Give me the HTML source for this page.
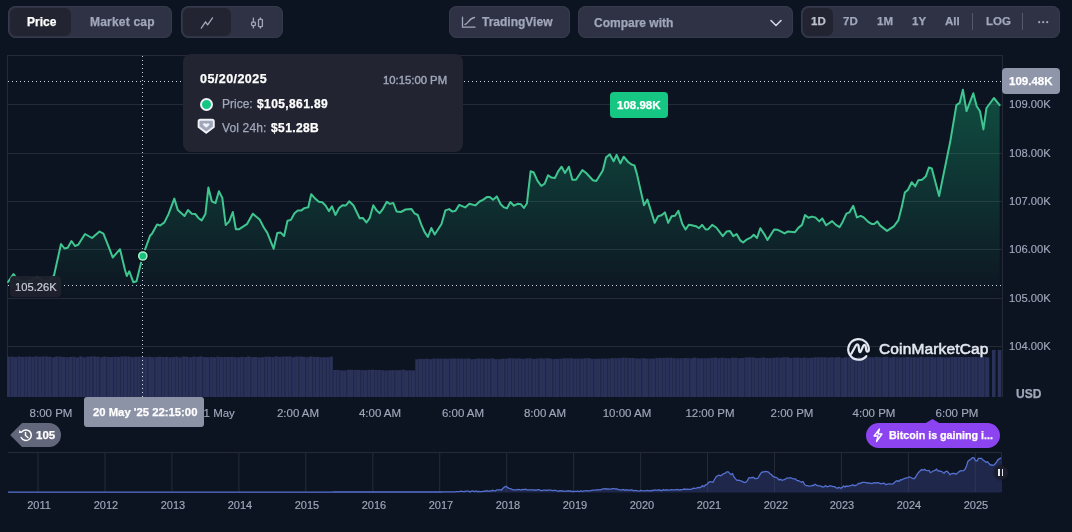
<!DOCTYPE html>
<html><head><meta charset="utf-8">
<style>
*{margin:0;padding:0;box-sizing:border-box}
html,body{width:1072px;height:532px;overflow:hidden;background:#0d1421;font-family:"Liberation Sans",sans-serif;-webkit-font-smoothing:antialiased}
.t,.xl,.yl,.yr{will-change:transform}
.abs{position:absolute}
.grp{position:absolute;background:#2f3244;border-radius:8px;box-shadow:inset 0 0 0 1px #363a4c}
.act{position:absolute;background:#222531;border-radius:6px}
.t{position:absolute;white-space:nowrap;line-height:14px;font-size:12px;font-weight:700;-webkit-text-stroke:0.25px currentColor}
.g{color:#a1a7bb}
.w{color:#fff}
.xl{position:absolute;top:406px;width:80px;text-align:center;font-size:11.5px;line-height:14px;color:#a1a7bb;white-space:nowrap;-webkit-text-stroke:0.15px #a1a7bb}
.yl{position:absolute;left:1008.5px;font-size:11.2px;line-height:14px;color:#a1a7bb;white-space:nowrap;-webkit-text-stroke:0.15px #a1a7bb}
.yr{position:absolute;top:498px;width:40px;text-align:center;font-size:11px;line-height:14px;color:#a1a7bb;-webkit-text-stroke:0.15px #a1a7bb}
svg{position:absolute;left:0;top:0}
</style></head><body>
<svg width="1072" height="532" viewBox="0 0 1072 532">
<defs>
<linearGradient id="gf" x1="0" y1="81" x2="0" y2="300" gradientUnits="userSpaceOnUse">
<stop offset="0" stop-color="#16c784" stop-opacity="0.34"/>
<stop offset="1" stop-color="#16c784" stop-opacity="0"/>
</linearGradient>
</defs>
<g stroke="#262a38" stroke-width="1" fill="none">
<line x1="7.5" y1="55" x2="7.5" y2="397"/>
<line x1="7" y1="55.5" x2="1002" y2="55.5"/>
<line x1="1002.5" y1="55" x2="1002.5" y2="397"/>
<line x1="7" y1="104.5" x2="1002" y2="104.5"/><line x1="7" y1="153.5" x2="1002" y2="153.5"/><line x1="7" y1="201.5" x2="1002" y2="201.5"/><line x1="7" y1="249.5" x2="1002" y2="249.5"/><line x1="7" y1="298.5" x2="1002" y2="298.5"/><line x1="7" y1="346.5" x2="1002" y2="346.5"/>
</g>
<g fill="#2a3259"><rect x="7.00" y="356.7" width="3.43" height="40.3"/><rect x="10.43" y="356.6" width="3.43" height="40.4"/><rect x="13.86" y="357.1" width="3.43" height="39.9"/><rect x="17.29" y="356.5" width="3.43" height="40.5"/><rect x="20.72" y="356.9" width="3.43" height="40.1"/><rect x="24.15" y="356.8" width="3.43" height="40.2"/><rect x="27.58" y="356.5" width="3.43" height="40.5"/><rect x="31.01" y="356.9" width="3.43" height="40.1"/><rect x="34.44" y="356.4" width="3.43" height="40.6"/><rect x="37.87" y="356.8" width="3.43" height="40.2"/><rect x="41.30" y="356.5" width="3.43" height="40.5"/><rect x="44.73" y="356.5" width="3.43" height="40.5"/><rect x="48.16" y="356.8" width="3.43" height="40.2"/><rect x="51.59" y="357.2" width="3.43" height="39.8"/><rect x="55.02" y="356.5" width="3.43" height="40.5"/><rect x="58.45" y="356.6" width="3.43" height="40.4"/><rect x="61.88" y="357.0" width="3.43" height="40.0"/><rect x="65.31" y="357.3" width="3.43" height="39.7"/><rect x="68.74" y="357.0" width="3.43" height="40.0"/><rect x="72.17" y="356.8" width="3.43" height="40.2"/><rect x="75.60" y="357.4" width="3.43" height="39.6"/><rect x="79.03" y="356.4" width="3.43" height="40.6"/><rect x="82.46" y="357.3" width="3.43" height="39.7"/><rect x="85.89" y="356.7" width="3.43" height="40.3"/><rect x="89.32" y="356.5" width="3.43" height="40.5"/><rect x="92.75" y="356.5" width="3.43" height="40.5"/><rect x="96.18" y="356.7" width="3.43" height="40.3"/><rect x="99.61" y="357.2" width="3.43" height="39.8"/><rect x="103.04" y="356.6" width="3.43" height="40.4"/><rect x="106.47" y="357.0" width="3.43" height="40.0"/><rect x="109.90" y="357.0" width="3.43" height="40.0"/><rect x="113.33" y="356.8" width="3.43" height="40.2"/><rect x="116.76" y="356.9" width="3.43" height="40.1"/><rect x="120.19" y="356.5" width="3.43" height="40.5"/><rect x="123.62" y="356.5" width="3.43" height="40.5"/><rect x="127.05" y="356.6" width="3.43" height="40.4"/><rect x="130.48" y="357.1" width="3.43" height="39.9"/><rect x="133.91" y="356.8" width="3.43" height="40.2"/><rect x="137.34" y="356.7" width="3.43" height="40.3"/><rect x="140.77" y="357.0" width="3.43" height="40.0"/><rect x="144.20" y="356.9" width="3.43" height="40.1"/><rect x="147.63" y="356.7" width="3.43" height="40.3"/><rect x="151.06" y="357.2" width="3.43" height="39.8"/><rect x="154.49" y="357.1" width="3.43" height="39.9"/><rect x="157.92" y="356.6" width="3.43" height="40.4"/><rect x="161.35" y="357.0" width="3.43" height="40.0"/><rect x="164.78" y="356.9" width="3.43" height="40.1"/><rect x="168.21" y="357.3" width="3.43" height="39.7"/><rect x="171.64" y="357.1" width="3.43" height="39.9"/><rect x="175.07" y="356.7" width="3.43" height="40.3"/><rect x="178.50" y="357.4" width="3.43" height="39.6"/><rect x="181.93" y="356.5" width="3.43" height="40.5"/><rect x="185.36" y="356.8" width="3.43" height="40.2"/><rect x="188.79" y="357.2" width="3.43" height="39.8"/><rect x="192.22" y="356.6" width="3.43" height="40.4"/><rect x="195.65" y="356.9" width="3.43" height="40.1"/><rect x="199.08" y="356.4" width="3.43" height="40.6"/><rect x="202.51" y="357.1" width="3.43" height="39.9"/><rect x="205.94" y="357.2" width="3.43" height="39.8"/><rect x="209.37" y="357.0" width="3.43" height="40.0"/><rect x="212.80" y="357.3" width="3.43" height="39.7"/><rect x="216.23" y="356.7" width="3.43" height="40.3"/><rect x="219.66" y="357.1" width="3.43" height="39.9"/><rect x="223.09" y="357.0" width="3.43" height="40.0"/><rect x="226.52" y="357.0" width="3.43" height="40.0"/><rect x="229.95" y="356.9" width="3.43" height="40.1"/><rect x="233.38" y="357.2" width="3.43" height="39.8"/><rect x="236.81" y="357.3" width="3.43" height="39.7"/><rect x="240.24" y="356.9" width="3.43" height="40.1"/><rect x="243.67" y="357.1" width="3.43" height="39.9"/><rect x="247.10" y="356.5" width="3.43" height="40.5"/><rect x="250.53" y="357.1" width="3.43" height="39.9"/><rect x="253.96" y="357.0" width="3.43" height="40.0"/><rect x="257.39" y="357.4" width="3.43" height="39.6"/><rect x="260.82" y="357.2" width="3.43" height="39.8"/><rect x="264.25" y="356.7" width="3.43" height="40.3"/><rect x="267.68" y="356.8" width="3.43" height="40.2"/><rect x="271.11" y="357.1" width="3.43" height="39.9"/><rect x="274.54" y="356.4" width="3.43" height="40.6"/><rect x="277.97" y="356.9" width="3.43" height="40.1"/><rect x="281.40" y="356.6" width="3.43" height="40.4"/><rect x="284.83" y="356.5" width="3.43" height="40.5"/><rect x="288.26" y="356.5" width="3.43" height="40.5"/><rect x="291.69" y="357.2" width="3.43" height="39.8"/><rect x="295.12" y="356.5" width="3.43" height="40.5"/><rect x="298.55" y="356.6" width="3.43" height="40.4"/><rect x="301.98" y="356.8" width="3.43" height="40.2"/><rect x="305.41" y="357.3" width="3.43" height="39.7"/><rect x="308.84" y="356.5" width="3.43" height="40.5"/><rect x="312.27" y="356.8" width="3.43" height="40.2"/><rect x="315.70" y="356.9" width="3.43" height="40.1"/><rect x="319.13" y="357.3" width="3.43" height="39.7"/><rect x="322.56" y="357.2" width="3.43" height="39.8"/><rect x="325.99" y="357.3" width="3.43" height="39.7"/><rect x="329.42" y="356.7" width="3.43" height="40.3"/><rect x="332.85" y="370.0" width="3.43" height="27.0"/><rect x="336.28" y="370.0" width="3.43" height="27.0"/><rect x="339.71" y="370.4" width="3.43" height="26.6"/><rect x="343.14" y="370.5" width="3.43" height="26.5"/><rect x="346.57" y="369.8" width="3.43" height="27.2"/><rect x="350.00" y="369.8" width="3.43" height="27.2"/><rect x="353.43" y="369.9" width="3.43" height="27.1"/><rect x="356.86" y="369.9" width="3.43" height="27.1"/><rect x="360.29" y="370.1" width="3.43" height="26.9"/><rect x="363.72" y="370.2" width="3.43" height="26.8"/><rect x="367.15" y="369.9" width="3.43" height="27.1"/><rect x="370.58" y="369.7" width="3.43" height="27.3"/><rect x="374.01" y="370.0" width="3.43" height="27.0"/><rect x="377.44" y="370.0" width="3.43" height="27.0"/><rect x="380.87" y="370.2" width="3.43" height="26.8"/><rect x="384.30" y="370.5" width="3.43" height="26.5"/><rect x="387.73" y="370.3" width="3.43" height="26.7"/><rect x="391.16" y="370.1" width="3.43" height="26.9"/><rect x="394.59" y="370.2" width="3.43" height="26.8"/><rect x="398.02" y="370.2" width="3.43" height="26.8"/><rect x="401.45" y="369.7" width="3.43" height="27.3"/><rect x="404.88" y="370.4" width="3.43" height="26.6"/><rect x="408.31" y="370.3" width="3.43" height="26.7"/><rect x="411.74" y="370.4" width="3.43" height="26.6"/><rect x="415.17" y="359.3" width="3.43" height="37.7"/><rect x="418.60" y="358.9" width="3.43" height="38.1"/><rect x="422.03" y="358.9" width="3.43" height="38.1"/><rect x="425.46" y="358.7" width="3.43" height="38.3"/><rect x="428.89" y="359.1" width="3.43" height="37.9"/><rect x="432.32" y="358.6" width="3.43" height="38.4"/><rect x="435.75" y="358.6" width="3.43" height="38.4"/><rect x="439.18" y="358.7" width="3.43" height="38.3"/><rect x="442.61" y="358.6" width="3.43" height="38.4"/><rect x="446.04" y="358.8" width="3.43" height="38.2"/><rect x="449.47" y="358.5" width="3.43" height="38.5"/><rect x="452.90" y="358.5" width="3.43" height="38.5"/><rect x="456.33" y="358.6" width="3.43" height="38.4"/><rect x="459.76" y="358.5" width="3.43" height="38.5"/><rect x="463.19" y="358.7" width="3.43" height="38.3"/><rect x="466.62" y="358.4" width="3.43" height="38.6"/><rect x="470.05" y="359.2" width="3.43" height="37.8"/><rect x="473.48" y="358.9" width="3.43" height="38.1"/><rect x="476.91" y="358.5" width="3.43" height="38.5"/><rect x="480.34" y="358.6" width="3.43" height="38.4"/><rect x="483.77" y="358.7" width="3.43" height="38.3"/><rect x="487.20" y="358.7" width="3.43" height="38.3"/><rect x="490.63" y="358.4" width="3.43" height="38.6"/><rect x="494.06" y="359.1" width="3.43" height="37.9"/><rect x="497.49" y="359.2" width="3.43" height="37.8"/><rect x="500.92" y="358.7" width="3.43" height="38.3"/><rect x="504.35" y="358.7" width="3.43" height="38.3"/><rect x="507.78" y="358.3" width="3.43" height="38.7"/><rect x="511.21" y="358.3" width="3.43" height="38.7"/><rect x="514.64" y="358.5" width="3.43" height="38.5"/><rect x="518.07" y="358.4" width="3.43" height="38.6"/><rect x="521.50" y="358.9" width="3.43" height="38.1"/><rect x="524.93" y="358.3" width="3.43" height="38.7"/><rect x="528.36" y="358.2" width="3.43" height="38.8"/><rect x="531.79" y="359.0" width="3.43" height="38.0"/><rect x="535.22" y="358.6" width="3.43" height="38.4"/><rect x="538.65" y="358.3" width="3.43" height="38.7"/><rect x="542.08" y="358.6" width="3.43" height="38.4"/><rect x="545.51" y="358.1" width="3.43" height="38.9"/><rect x="548.94" y="358.6" width="3.43" height="38.4"/><rect x="552.37" y="359.0" width="3.43" height="38.0"/><rect x="555.80" y="358.8" width="3.43" height="38.2"/><rect x="559.23" y="358.7" width="3.43" height="38.3"/><rect x="562.66" y="358.3" width="3.43" height="38.7"/><rect x="566.09" y="358.4" width="3.43" height="38.6"/><rect x="569.52" y="358.2" width="3.43" height="38.8"/><rect x="572.95" y="358.7" width="3.43" height="38.3"/><rect x="576.38" y="358.5" width="3.43" height="38.5"/><rect x="579.81" y="358.7" width="3.43" height="38.3"/><rect x="583.24" y="358.3" width="3.43" height="38.7"/><rect x="586.67" y="358.1" width="3.43" height="38.9"/><rect x="590.10" y="358.7" width="3.43" height="38.3"/><rect x="593.53" y="358.8" width="3.43" height="38.2"/><rect x="596.96" y="358.7" width="3.43" height="38.3"/><rect x="600.39" y="358.6" width="3.43" height="38.4"/><rect x="603.82" y="358.6" width="3.43" height="38.4"/><rect x="607.25" y="358.5" width="3.43" height="38.5"/><rect x="610.68" y="358.1" width="3.43" height="38.9"/><rect x="614.11" y="358.3" width="3.43" height="38.7"/><rect x="617.54" y="358.1" width="3.43" height="38.9"/><rect x="620.97" y="357.8" width="3.43" height="39.2"/><rect x="624.40" y="357.8" width="3.43" height="39.2"/><rect x="627.83" y="358.0" width="3.43" height="39.0"/><rect x="631.26" y="358.0" width="3.43" height="39.0"/><rect x="634.69" y="358.4" width="3.43" height="38.6"/><rect x="638.12" y="358.6" width="3.43" height="38.4"/><rect x="641.55" y="358.1" width="3.43" height="38.9"/><rect x="644.98" y="358.6" width="3.43" height="38.4"/><rect x="648.41" y="358.6" width="3.43" height="38.4"/><rect x="651.84" y="358.6" width="3.43" height="38.4"/><rect x="655.27" y="358.0" width="3.43" height="39.0"/><rect x="658.70" y="357.9" width="3.43" height="39.1"/><rect x="662.13" y="357.9" width="3.43" height="39.1"/><rect x="665.56" y="357.8" width="3.43" height="39.2"/><rect x="668.99" y="357.8" width="3.43" height="39.2"/><rect x="672.42" y="358.2" width="3.43" height="38.8"/><rect x="675.85" y="358.4" width="3.43" height="38.6"/><rect x="679.28" y="358.3" width="3.43" height="38.7"/><rect x="682.71" y="358.0" width="3.43" height="39.0"/><rect x="686.14" y="358.2" width="3.43" height="38.8"/><rect x="689.57" y="358.3" width="3.43" height="38.7"/><rect x="693.00" y="357.6" width="3.43" height="39.4"/><rect x="696.43" y="358.1" width="3.43" height="38.9"/><rect x="699.86" y="358.3" width="3.43" height="38.7"/><rect x="703.29" y="358.2" width="3.43" height="38.8"/><rect x="706.72" y="358.2" width="3.43" height="38.8"/><rect x="710.15" y="357.9" width="3.43" height="39.1"/><rect x="713.58" y="357.6" width="3.43" height="39.4"/><rect x="717.01" y="358.2" width="3.43" height="38.8"/><rect x="720.44" y="357.7" width="3.43" height="39.3"/><rect x="723.87" y="358.1" width="3.43" height="38.9"/><rect x="727.30" y="358.3" width="3.43" height="38.7"/><rect x="730.73" y="357.7" width="3.43" height="39.3"/><rect x="734.16" y="357.7" width="3.43" height="39.3"/><rect x="737.59" y="358.2" width="3.43" height="38.8"/><rect x="741.02" y="358.0" width="3.43" height="39.0"/><rect x="744.45" y="357.5" width="3.43" height="39.5"/><rect x="747.88" y="357.4" width="3.43" height="39.6"/><rect x="751.31" y="357.4" width="3.43" height="39.6"/><rect x="754.74" y="358.1" width="3.43" height="38.9"/><rect x="758.17" y="358.0" width="3.43" height="39.0"/><rect x="761.60" y="357.4" width="3.43" height="39.6"/><rect x="765.03" y="358.0" width="3.43" height="39.0"/><rect x="768.46" y="358.1" width="3.43" height="38.9"/><rect x="771.89" y="357.8" width="3.43" height="39.2"/><rect x="775.32" y="357.5" width="3.43" height="39.5"/><rect x="778.75" y="357.7" width="3.43" height="39.3"/><rect x="782.18" y="357.3" width="3.43" height="39.7"/><rect x="785.61" y="357.2" width="3.43" height="39.8"/><rect x="789.04" y="358.0" width="3.43" height="39.0"/><rect x="792.47" y="357.7" width="3.43" height="39.3"/><rect x="795.90" y="357.6" width="3.43" height="39.4"/><rect x="799.33" y="358.0" width="3.43" height="39.0"/><rect x="802.76" y="357.5" width="3.43" height="39.5"/><rect x="806.19" y="357.9" width="3.43" height="39.1"/><rect x="809.62" y="357.8" width="3.43" height="39.2"/><rect x="813.05" y="357.3" width="3.43" height="39.7"/><rect x="816.48" y="357.3" width="3.43" height="39.7"/><rect x="819.91" y="357.3" width="3.43" height="39.7"/><rect x="823.34" y="357.3" width="3.43" height="39.7"/><rect x="826.77" y="357.6" width="3.43" height="39.4"/><rect x="830.20" y="357.2" width="3.43" height="39.8"/><rect x="833.63" y="357.4" width="3.43" height="39.6"/><rect x="837.06" y="357.1" width="3.43" height="39.9"/><rect x="840.49" y="357.8" width="3.43" height="39.2"/><rect x="843.92" y="357.3" width="3.43" height="39.7"/><rect x="847.35" y="357.4" width="3.43" height="39.6"/><rect x="850.78" y="357.5" width="3.43" height="39.5"/><rect x="854.21" y="357.7" width="3.43" height="39.3"/><rect x="857.64" y="357.3" width="3.43" height="39.7"/><rect x="861.07" y="357.7" width="3.43" height="39.3"/><rect x="864.50" y="357.3" width="3.43" height="39.7"/><rect x="867.93" y="357.3" width="3.43" height="39.7"/><rect x="871.36" y="357.3" width="3.43" height="39.7"/><rect x="874.79" y="356.9" width="3.43" height="40.1"/><rect x="878.22" y="357.2" width="3.43" height="39.8"/><rect x="881.65" y="357.0" width="3.43" height="40.0"/><rect x="885.08" y="356.8" width="3.43" height="40.2"/><rect x="888.51" y="357.5" width="3.43" height="39.5"/><rect x="891.94" y="356.9" width="3.43" height="40.1"/><rect x="895.37" y="357.2" width="3.43" height="39.8"/><rect x="898.80" y="357.4" width="3.43" height="39.6"/><rect x="902.23" y="357.2" width="3.43" height="39.8"/><rect x="905.66" y="357.0" width="3.43" height="40.0"/><rect x="909.09" y="357.2" width="3.43" height="39.8"/><rect x="912.52" y="357.2" width="3.43" height="39.8"/><rect x="915.95" y="357.4" width="3.43" height="39.6"/><rect x="919.38" y="356.8" width="3.43" height="40.2"/><rect x="922.81" y="357.2" width="3.43" height="39.8"/><rect x="926.24" y="356.9" width="3.43" height="40.1"/><rect x="929.67" y="356.9" width="3.43" height="40.1"/><rect x="933.10" y="357.3" width="3.43" height="39.7"/><rect x="936.53" y="357.1" width="3.43" height="39.9"/><rect x="939.96" y="357.1" width="3.43" height="39.9"/><rect x="943.39" y="357.3" width="3.43" height="39.7"/><rect x="946.82" y="357.4" width="3.43" height="39.6"/><rect x="950.25" y="356.9" width="3.43" height="40.1"/><rect x="953.68" y="357.1" width="3.43" height="39.9"/><rect x="957.11" y="357.0" width="3.43" height="40.0"/><rect x="960.54" y="357.0" width="3.43" height="40.0"/><rect x="963.97" y="357.1" width="3.43" height="39.9"/><rect x="967.40" y="356.9" width="3.43" height="40.1"/><rect x="970.83" y="356.9" width="3.43" height="40.1"/><rect x="974.26" y="356.9" width="3.43" height="40.1"/><rect x="977.69" y="357.3" width="3.43" height="39.7"/><rect x="981.12" y="357.1" width="3.43" height="39.9"/><rect x="984.55" y="357.2" width="3.43" height="39.8"/><rect x="987.98" y="357.3" width="1.32" height="39.7"/></g><g fill="#1f2646" fill-opacity="0.7"><rect x="10.43" y="356.6" width="0.8" height="40.4"/><rect x="17.29" y="356.5" width="0.8" height="40.5"/><rect x="24.15" y="356.8" width="0.8" height="40.2"/><rect x="31.01" y="356.9" width="0.8" height="40.1"/><rect x="37.87" y="356.8" width="0.8" height="40.2"/><rect x="44.73" y="356.5" width="0.8" height="40.5"/><rect x="51.59" y="357.2" width="0.8" height="39.8"/><rect x="58.45" y="356.6" width="0.8" height="40.4"/><rect x="65.31" y="357.3" width="0.8" height="39.7"/><rect x="72.17" y="356.8" width="0.8" height="40.2"/><rect x="79.03" y="356.4" width="0.8" height="40.6"/><rect x="85.89" y="356.7" width="0.8" height="40.3"/><rect x="92.75" y="356.5" width="0.8" height="40.5"/><rect x="99.61" y="357.2" width="0.8" height="39.8"/><rect x="106.47" y="357.0" width="0.8" height="40.0"/><rect x="113.33" y="356.8" width="0.8" height="40.2"/><rect x="120.19" y="356.5" width="0.8" height="40.5"/><rect x="127.05" y="356.6" width="0.8" height="40.4"/><rect x="133.91" y="356.8" width="0.8" height="40.2"/><rect x="140.77" y="357.0" width="0.8" height="40.0"/><rect x="147.63" y="356.7" width="0.8" height="40.3"/><rect x="154.49" y="357.1" width="0.8" height="39.9"/><rect x="161.35" y="357.0" width="0.8" height="40.0"/><rect x="168.21" y="357.3" width="0.8" height="39.7"/><rect x="175.07" y="356.7" width="0.8" height="40.3"/><rect x="181.93" y="356.5" width="0.8" height="40.5"/><rect x="188.79" y="357.2" width="0.8" height="39.8"/><rect x="195.65" y="356.9" width="0.8" height="40.1"/><rect x="202.51" y="357.1" width="0.8" height="39.9"/><rect x="209.37" y="357.0" width="0.8" height="40.0"/><rect x="216.23" y="356.7" width="0.8" height="40.3"/><rect x="223.09" y="357.0" width="0.8" height="40.0"/><rect x="229.95" y="356.9" width="0.8" height="40.1"/><rect x="236.81" y="357.3" width="0.8" height="39.7"/><rect x="243.67" y="357.1" width="0.8" height="39.9"/><rect x="250.53" y="357.1" width="0.8" height="39.9"/><rect x="257.39" y="357.4" width="0.8" height="39.6"/><rect x="264.25" y="356.7" width="0.8" height="40.3"/><rect x="271.11" y="357.1" width="0.8" height="39.9"/><rect x="277.97" y="356.9" width="0.8" height="40.1"/><rect x="284.83" y="356.5" width="0.8" height="40.5"/><rect x="291.69" y="357.2" width="0.8" height="39.8"/><rect x="298.55" y="356.6" width="0.8" height="40.4"/><rect x="305.41" y="357.3" width="0.8" height="39.7"/><rect x="312.27" y="356.8" width="0.8" height="40.2"/><rect x="319.13" y="357.3" width="0.8" height="39.7"/><rect x="325.99" y="357.3" width="0.8" height="39.7"/><rect x="332.85" y="370.0" width="0.8" height="27.0"/><rect x="339.71" y="370.4" width="0.8" height="26.6"/><rect x="346.57" y="369.8" width="0.8" height="27.2"/><rect x="353.43" y="369.9" width="0.8" height="27.1"/><rect x="360.29" y="370.1" width="0.8" height="26.9"/><rect x="367.15" y="369.9" width="0.8" height="27.1"/><rect x="374.01" y="370.0" width="0.8" height="27.0"/><rect x="380.87" y="370.2" width="0.8" height="26.8"/><rect x="387.73" y="370.3" width="0.8" height="26.7"/><rect x="394.59" y="370.2" width="0.8" height="26.8"/><rect x="401.45" y="369.7" width="0.8" height="27.3"/><rect x="408.31" y="370.3" width="0.8" height="26.7"/><rect x="415.17" y="359.3" width="0.8" height="37.7"/><rect x="422.03" y="358.9" width="0.8" height="38.1"/><rect x="428.89" y="359.1" width="0.8" height="37.9"/><rect x="435.75" y="358.6" width="0.8" height="38.4"/><rect x="442.61" y="358.6" width="0.8" height="38.4"/><rect x="449.47" y="358.5" width="0.8" height="38.5"/><rect x="456.33" y="358.6" width="0.8" height="38.4"/><rect x="463.19" y="358.7" width="0.8" height="38.3"/><rect x="470.05" y="359.2" width="0.8" height="37.8"/><rect x="476.91" y="358.5" width="0.8" height="38.5"/><rect x="483.77" y="358.7" width="0.8" height="38.3"/><rect x="490.63" y="358.4" width="0.8" height="38.6"/><rect x="497.49" y="359.2" width="0.8" height="37.8"/><rect x="504.35" y="358.7" width="0.8" height="38.3"/><rect x="511.21" y="358.3" width="0.8" height="38.7"/><rect x="518.07" y="358.4" width="0.8" height="38.6"/><rect x="524.93" y="358.3" width="0.8" height="38.7"/><rect x="531.79" y="359.0" width="0.8" height="38.0"/><rect x="538.65" y="358.3" width="0.8" height="38.7"/><rect x="545.51" y="358.1" width="0.8" height="38.9"/><rect x="552.37" y="359.0" width="0.8" height="38.0"/><rect x="559.23" y="358.7" width="0.8" height="38.3"/><rect x="566.09" y="358.4" width="0.8" height="38.6"/><rect x="572.95" y="358.7" width="0.8" height="38.3"/><rect x="579.81" y="358.7" width="0.8" height="38.3"/><rect x="586.67" y="358.1" width="0.8" height="38.9"/><rect x="593.53" y="358.8" width="0.8" height="38.2"/><rect x="600.39" y="358.6" width="0.8" height="38.4"/><rect x="607.25" y="358.5" width="0.8" height="38.5"/><rect x="614.11" y="358.3" width="0.8" height="38.7"/><rect x="620.97" y="357.8" width="0.8" height="39.2"/><rect x="627.83" y="358.0" width="0.8" height="39.0"/><rect x="634.69" y="358.4" width="0.8" height="38.6"/><rect x="641.55" y="358.1" width="0.8" height="38.9"/><rect x="648.41" y="358.6" width="0.8" height="38.4"/><rect x="655.27" y="358.0" width="0.8" height="39.0"/><rect x="662.13" y="357.9" width="0.8" height="39.1"/><rect x="668.99" y="357.8" width="0.8" height="39.2"/><rect x="675.85" y="358.4" width="0.8" height="38.6"/><rect x="682.71" y="358.0" width="0.8" height="39.0"/><rect x="689.57" y="358.3" width="0.8" height="38.7"/><rect x="696.43" y="358.1" width="0.8" height="38.9"/><rect x="703.29" y="358.2" width="0.8" height="38.8"/><rect x="710.15" y="357.9" width="0.8" height="39.1"/><rect x="717.01" y="358.2" width="0.8" height="38.8"/><rect x="723.87" y="358.1" width="0.8" height="38.9"/><rect x="730.73" y="357.7" width="0.8" height="39.3"/><rect x="737.59" y="358.2" width="0.8" height="38.8"/><rect x="744.45" y="357.5" width="0.8" height="39.5"/><rect x="751.31" y="357.4" width="0.8" height="39.6"/><rect x="758.17" y="358.0" width="0.8" height="39.0"/><rect x="765.03" y="358.0" width="0.8" height="39.0"/><rect x="771.89" y="357.8" width="0.8" height="39.2"/><rect x="778.75" y="357.7" width="0.8" height="39.3"/><rect x="785.61" y="357.2" width="0.8" height="39.8"/><rect x="792.47" y="357.7" width="0.8" height="39.3"/><rect x="799.33" y="358.0" width="0.8" height="39.0"/><rect x="806.19" y="357.9" width="0.8" height="39.1"/><rect x="813.05" y="357.3" width="0.8" height="39.7"/><rect x="819.91" y="357.3" width="0.8" height="39.7"/><rect x="826.77" y="357.6" width="0.8" height="39.4"/><rect x="833.63" y="357.4" width="0.8" height="39.6"/><rect x="840.49" y="357.8" width="0.8" height="39.2"/><rect x="847.35" y="357.4" width="0.8" height="39.6"/><rect x="854.21" y="357.7" width="0.8" height="39.3"/><rect x="861.07" y="357.7" width="0.8" height="39.3"/><rect x="867.93" y="357.3" width="0.8" height="39.7"/><rect x="874.79" y="356.9" width="0.8" height="40.1"/><rect x="881.65" y="357.0" width="0.8" height="40.0"/><rect x="888.51" y="357.5" width="0.8" height="39.5"/><rect x="895.37" y="357.2" width="0.8" height="39.8"/><rect x="902.23" y="357.2" width="0.8" height="39.8"/><rect x="909.09" y="357.2" width="0.8" height="39.8"/><rect x="915.95" y="357.4" width="0.8" height="39.6"/><rect x="922.81" y="357.2" width="0.8" height="39.8"/><rect x="929.67" y="356.9" width="0.8" height="40.1"/><rect x="936.53" y="357.1" width="0.8" height="39.9"/><rect x="943.39" y="357.3" width="0.8" height="39.7"/><rect x="950.25" y="356.9" width="0.8" height="40.1"/><rect x="957.11" y="357.0" width="0.8" height="40.0"/><rect x="963.97" y="357.1" width="0.8" height="39.9"/><rect x="970.83" y="356.9" width="0.8" height="40.1"/><rect x="977.69" y="357.3" width="0.8" height="39.7"/><rect x="984.55" y="357.2" width="0.8" height="39.8"/></g>
<rect x="992" y="350" width="3.6" height="47" fill="#2a3259"/>
<rect x="997.8" y="350" width="3.6" height="47" fill="#2a3259"/>
<path d="M8.0,282.0 L13.5,274.0 L18.0,280.0 L25.0,282.0 L31.0,280.5 L37.0,276.8 L43.0,280.5 L49.0,281.0 L54.0,275.5 L61.0,244.0 L64.5,248.5 L67.7,247.8 L71.5,241.0 L75.0,246.0 L78.2,244.8 L85.0,234.0 L92.0,238.0 L99.5,231.5 L103.4,233.7 L109.6,249.2 L112.7,257.5 L120.0,249.2 L125.0,270.0 L126.8,276.0 L129.3,271.3 L133.4,282.3 L136.5,281.2 L142.7,256.0 L150.0,235.8 L152.0,233.7 L157.1,224.4 L160.2,225.5 L164.4,222.4 L168.5,214.1 L174.3,198.6 L177.8,210.0 L184.5,216.0 L188.0,210.0 L191.8,213.7 L195.2,214.0 L198.6,218.2 L201.7,220.4 L205.4,214.0 L208.4,187.4 L211.8,201.3 L215.5,203.0 L218.9,191.2 L222.3,197.9 L225.7,225.0 L229.1,221.6 L232.8,212.0 L235.9,229.2 L239.2,229.2 L246.9,224.2 L252.8,213.7 L259.6,219.4 L263.8,227.5 L267.2,232.6 L273.6,248.7 L277.3,233.0 L280.7,232.6 L284.1,236.0 L287.5,220.8 L290.9,219.9 L294.5,213.2 L297.8,210.5 L301.0,210.6 L304.4,208.1 L308.3,207.2 L311.2,194.2 L315.4,198.8 L318.8,201.8 L322.2,202.2 L325.5,205.5 L328.9,211.1 L332.0,206.4 L335.4,214.9 L339.1,208.1 L342.5,205.2 L345.9,205.5 L349.2,201.3 L353.5,205.5 L359.7,218.2 L362.8,217.9 L366.5,222.5 L369.6,218.2 L373.3,205.2 L376.7,210.6 L379.7,213.2 L383.1,208.6 L386.8,201.8 L389.9,203.9 L393.3,203.0 L396.6,211.5 L400.9,212.0 L405.5,209.5 L411.5,209.1 L414.4,213.3 L417.8,215.0 L421.2,224.3 L424.5,231.9 L427.9,237.0 L431.3,228.0 L434.7,234.5 L441.5,224.0 L445.4,210.4 L449.1,209.1 L452.5,211.6 L455.5,210.8 L459.2,204.9 L465.2,207.4 L469.4,203.7 L475.3,205.4 L479.6,201.5 L482.9,199.8 L487.2,196.9 L489.7,196.9 L493.1,199.8 L496.8,196.4 L500.7,204.3 L504.1,207.4 L507.0,208.2 L510.4,202.0 L513.9,205.7 L517.6,203.8 L521.0,204.3 L523.9,208.0 L526.9,203.5 L530.6,171.3 L533.7,172.5 L537.4,180.6 L541.3,186.0 L544.7,183.7 L548.1,175.2 L551.5,177.6 L554.9,178.1 L558.2,171.3 L561.6,166.7 L565.0,173.0 L568.9,166.7 L572.3,179.8 L576.0,179.8 L582.4,170.1 L586.2,173.0 L592.9,180.3 L596.3,181.0 L602.8,170.5 L606.1,157.3 L609.9,154.4 L613.6,161.2 L616.6,154.9 L620.4,163.4 L623.7,156.7 L628.1,162.0 L631.5,164.5 L634.4,165.4 L636.9,173.9 L644.0,205.2 L647.4,199.6 L654.7,222.9 L658.1,216.2 L661.5,215.3 L664.9,212.4 L668.2,222.9 L671.6,216.2 L675.0,215.8 L678.4,210.8 L682.2,223.7 L685.6,229.5 L688.8,224.8 L691.8,225.3 L695.8,226.2 L699.1,228.2 L702.1,224.9 L705.7,229.5 L708.3,229.2 L712.2,224.9 L716.2,227.5 L722.8,236.1 L726.7,231.4 L730.0,231.1 L733.3,236.1 L736.6,234.1 L740.5,240.7 L743.2,242.4 L747.1,239.3 L751.1,237.4 L753.7,234.7 L757.0,238.0 L760.3,228.2 L764.2,234.1 L767.5,240.0 L774.1,229.5 L777.4,229.7 L784.6,233.4 L787.9,231.4 L795.0,232.2 L798.3,227.9 L802.0,224.9 L805.0,215.1 L808.3,217.8 L811.8,216.6 L815.3,217.4 L819.3,221.4 L822.3,218.4 L826.1,225.3 L832.1,221.1 L835.9,224.9 L839.6,227.1 L842.6,221.9 L846.4,213.6 L849.4,212.4 L853.2,205.8 L856.9,217.4 L860.7,215.9 L863.7,217.4 L868.2,221.9 L872.0,224.1 L874.2,224.1 L877.2,221.4 L880.2,225.6 L887.0,230.9 L893.8,226.4 L898.3,220.4 L902.0,206.1 L904.8,192.6 L908.0,189.8 L911.7,182.2 L915.2,186.4 L918.3,180.2 L922.0,179.8 L925.7,176.6 L928.9,167.5 L931.8,168.5 L939.1,196.1 L950.2,141.8 L956.4,105.1 L959.7,102.9 L962.9,89.7 L966.5,111.1 L973.3,93.3 L976.7,106.3 L980.0,111.3 L983.4,129.4 L986.5,108.0 L993.9,98.0 L999.6,105.1 L999.6,346 L8.0,346 Z" fill="url(#gf)"/>
<path d="M8.0,282.0 L13.5,274.0 L18.0,280.0 L25.0,282.0 L31.0,280.5 L37.0,276.8 L43.0,280.5 L49.0,281.0 L54.0,275.5 L61.0,244.0 L64.5,248.5 L67.7,247.8 L71.5,241.0 L75.0,246.0 L78.2,244.8 L85.0,234.0 L92.0,238.0 L99.5,231.5 L103.4,233.7 L109.6,249.2 L112.7,257.5 L120.0,249.2 L125.0,270.0 L126.8,276.0 L129.3,271.3 L133.4,282.3 L136.5,281.2 L142.7,256.0 L150.0,235.8 L152.0,233.7 L157.1,224.4 L160.2,225.5 L164.4,222.4 L168.5,214.1 L174.3,198.6 L177.8,210.0 L184.5,216.0 L188.0,210.0 L191.8,213.7 L195.2,214.0 L198.6,218.2 L201.7,220.4 L205.4,214.0 L208.4,187.4 L211.8,201.3 L215.5,203.0 L218.9,191.2 L222.3,197.9 L225.7,225.0 L229.1,221.6 L232.8,212.0 L235.9,229.2 L239.2,229.2 L246.9,224.2 L252.8,213.7 L259.6,219.4 L263.8,227.5 L267.2,232.6 L273.6,248.7 L277.3,233.0 L280.7,232.6 L284.1,236.0 L287.5,220.8 L290.9,219.9 L294.5,213.2 L297.8,210.5 L301.0,210.6 L304.4,208.1 L308.3,207.2 L311.2,194.2 L315.4,198.8 L318.8,201.8 L322.2,202.2 L325.5,205.5 L328.9,211.1 L332.0,206.4 L335.4,214.9 L339.1,208.1 L342.5,205.2 L345.9,205.5 L349.2,201.3 L353.5,205.5 L359.7,218.2 L362.8,217.9 L366.5,222.5 L369.6,218.2 L373.3,205.2 L376.7,210.6 L379.7,213.2 L383.1,208.6 L386.8,201.8 L389.9,203.9 L393.3,203.0 L396.6,211.5 L400.9,212.0 L405.5,209.5 L411.5,209.1 L414.4,213.3 L417.8,215.0 L421.2,224.3 L424.5,231.9 L427.9,237.0 L431.3,228.0 L434.7,234.5 L441.5,224.0 L445.4,210.4 L449.1,209.1 L452.5,211.6 L455.5,210.8 L459.2,204.9 L465.2,207.4 L469.4,203.7 L475.3,205.4 L479.6,201.5 L482.9,199.8 L487.2,196.9 L489.7,196.9 L493.1,199.8 L496.8,196.4 L500.7,204.3 L504.1,207.4 L507.0,208.2 L510.4,202.0 L513.9,205.7 L517.6,203.8 L521.0,204.3 L523.9,208.0 L526.9,203.5 L530.6,171.3 L533.7,172.5 L537.4,180.6 L541.3,186.0 L544.7,183.7 L548.1,175.2 L551.5,177.6 L554.9,178.1 L558.2,171.3 L561.6,166.7 L565.0,173.0 L568.9,166.7 L572.3,179.8 L576.0,179.8 L582.4,170.1 L586.2,173.0 L592.9,180.3 L596.3,181.0 L602.8,170.5 L606.1,157.3 L609.9,154.4 L613.6,161.2 L616.6,154.9 L620.4,163.4 L623.7,156.7 L628.1,162.0 L631.5,164.5 L634.4,165.4 L636.9,173.9 L644.0,205.2 L647.4,199.6 L654.7,222.9 L658.1,216.2 L661.5,215.3 L664.9,212.4 L668.2,222.9 L671.6,216.2 L675.0,215.8 L678.4,210.8 L682.2,223.7 L685.6,229.5 L688.8,224.8 L691.8,225.3 L695.8,226.2 L699.1,228.2 L702.1,224.9 L705.7,229.5 L708.3,229.2 L712.2,224.9 L716.2,227.5 L722.8,236.1 L726.7,231.4 L730.0,231.1 L733.3,236.1 L736.6,234.1 L740.5,240.7 L743.2,242.4 L747.1,239.3 L751.1,237.4 L753.7,234.7 L757.0,238.0 L760.3,228.2 L764.2,234.1 L767.5,240.0 L774.1,229.5 L777.4,229.7 L784.6,233.4 L787.9,231.4 L795.0,232.2 L798.3,227.9 L802.0,224.9 L805.0,215.1 L808.3,217.8 L811.8,216.6 L815.3,217.4 L819.3,221.4 L822.3,218.4 L826.1,225.3 L832.1,221.1 L835.9,224.9 L839.6,227.1 L842.6,221.9 L846.4,213.6 L849.4,212.4 L853.2,205.8 L856.9,217.4 L860.7,215.9 L863.7,217.4 L868.2,221.9 L872.0,224.1 L874.2,224.1 L877.2,221.4 L880.2,225.6 L887.0,230.9 L893.8,226.4 L898.3,220.4 L902.0,206.1 L904.8,192.6 L908.0,189.8 L911.7,182.2 L915.2,186.4 L918.3,180.2 L922.0,179.8 L925.7,176.6 L928.9,167.5 L931.8,168.5 L939.1,196.1 L950.2,141.8 L956.4,105.1 L959.7,102.9 L962.9,89.7 L966.5,111.1 L973.3,93.3 L976.7,106.3 L980.0,111.3 L983.4,129.4 L986.5,108.0 L993.9,98.0 L999.6,105.1" fill="none" stroke="#3fc690" stroke-width="2" stroke-linejoin="round" stroke-linecap="round"/>
<line x1="8" y1="81.5" x2="1002" y2="81.5" stroke="#cfd6e4" stroke-width="1" stroke-dasharray="1 3"/>
<line x1="8" y1="285.5" x2="1002" y2="285.5" stroke="#cfd6e4" stroke-width="1" stroke-dasharray="1 3"/>
<line x1="142.5" y1="56" x2="142.5" y2="397" stroke="#cfd6e4" stroke-width="1" stroke-dasharray="1 3"/>
<circle cx="142.8" cy="256" r="6.2" fill="#0b1119"/><circle cx="142.8" cy="256" r="4.1" fill="#19c080" stroke="#a8f0cc" stroke-width="1.5"/>
<g stroke="#262a38" stroke-width="1">
<line x1="8" y1="452.5" x2="1002" y2="452.5"/>
<line x1="38.0" y1="452" x2="38.0" y2="492"/><line x1="105.0" y1="452" x2="105.0" y2="492"/><line x1="171.9" y1="452" x2="171.9" y2="492"/><line x1="238.9" y1="452" x2="238.9" y2="492"/><line x1="305.8" y1="452" x2="305.8" y2="492"/><line x1="372.8" y1="452" x2="372.8" y2="492"/><line x1="439.7" y1="452" x2="439.7" y2="492"/><line x1="506.7" y1="452" x2="506.7" y2="492"/><line x1="573.6" y1="452" x2="573.6" y2="492"/><line x1="640.6" y1="452" x2="640.6" y2="492"/><line x1="707.5" y1="452" x2="707.5" y2="492"/><line x1="774.5" y1="452" x2="774.5" y2="492"/><line x1="841.4" y1="452" x2="841.4" y2="492"/><line x1="908.4" y1="452" x2="908.4" y2="492"/><line x1="975.3" y1="452" x2="975.3" y2="492"/>
<line x1="1001.5" y1="452" x2="1001.5" y2="492"/>
</g>
<path d="M8.0,492.2 L9.5,492.2 L11.0,492.2 L12.5,492.2 L14.0,492.2 L15.5,492.2 L17.0,492.2 L18.5,492.2 L20.0,492.2 L21.5,492.2 L23.0,492.2 L24.5,492.2 L26.0,492.2 L27.5,492.2 L29.0,492.2 L30.5,492.2 L32.0,492.2 L33.5,492.2 L35.0,492.2 L36.5,492.2 L38.0,492.2 L39.5,492.2 L41.0,492.2 L42.5,492.2 L44.0,492.2 L45.5,492.2 L47.0,492.2 L48.5,492.2 L50.0,492.2 L51.5,492.2 L53.0,492.2 L54.5,492.2 L56.0,492.2 L57.5,492.2 L59.0,492.2 L60.5,492.2 L62.0,492.2 L63.5,492.2 L65.0,492.2 L66.5,492.2 L68.0,492.2 L69.5,492.2 L71.0,492.2 L72.5,492.2 L74.0,492.2 L75.5,492.2 L77.0,492.2 L78.5,492.2 L80.0,492.2 L81.5,492.2 L83.0,492.2 L84.5,492.2 L86.0,492.2 L87.5,492.2 L89.0,492.2 L90.5,492.2 L92.0,492.2 L93.5,492.2 L95.0,492.2 L96.5,492.2 L98.0,492.2 L99.5,492.2 L101.0,492.2 L102.5,492.2 L104.0,492.2 L105.5,492.2 L107.0,492.2 L108.5,492.2 L110.0,492.2 L111.5,492.2 L113.0,492.2 L114.5,492.2 L116.0,492.1 L117.5,492.1 L119.0,492.1 L120.5,492.1 L122.0,492.1 L123.5,492.1 L125.0,492.1 L126.5,492.1 L128.0,492.1 L129.5,492.1 L131.0,492.1 L132.5,492.1 L134.0,492.1 L135.5,492.1 L137.0,492.1 L138.5,492.1 L140.0,492.1 L141.5,492.1 L143.0,492.1 L144.5,492.1 L146.0,492.1 L147.5,492.1 L149.0,492.1 L150.5,492.1 L152.0,492.1 L153.5,492.1 L155.0,492.1 L156.5,492.1 L158.0,492.1 L159.5,492.1 L161.0,492.1 L162.5,492.1 L164.0,492.1 L165.5,492.1 L167.0,492.1 L168.5,492.1 L170.0,492.1 L171.5,492.1 L173.0,492.1 L174.5,492.1 L176.0,492.1 L177.5,492.1 L179.0,492.1 L180.5,492.1 L182.0,492.1 L183.5,492.1 L185.0,492.1 L186.5,492.1 L188.0,492.1 L189.5,492.1 L191.0,492.1 L192.5,492.1 L194.0,492.1 L195.5,492.1 L197.0,492.1 L198.5,492.1 L200.0,492.1 L201.5,492.1 L203.0,492.1 L204.5,492.1 L206.0,492.1 L207.5,492.1 L209.0,492.1 L210.5,492.1 L212.0,492.1 L213.5,492.1 L215.0,492.1 L216.5,492.1 L218.0,492.1 L219.5,492.1 L221.0,492.1 L222.5,492.1 L224.0,492.1 L225.5,492.1 L227.0,492.1 L228.5,492.1 L230.0,492.1 L231.5,492.1 L233.0,492.1 L234.5,492.1 L236.0,492.1 L237.5,492.1 L239.0,492.1 L240.5,492.1 L242.0,492.1 L243.5,492.1 L245.0,492.1 L246.5,492.1 L248.0,492.1 L249.5,492.1 L251.0,492.1 L252.5,492.1 L254.0,492.1 L255.5,492.1 L257.0,492.1 L258.5,492.1 L260.0,492.1 L261.5,492.1 L263.0,492.1 L264.5,492.1 L266.0,492.1 L267.5,492.1 L269.0,492.1 L270.5,492.1 L272.0,492.1 L273.5,492.1 L275.0,492.1 L276.5,492.1 L278.0,492.1 L279.5,492.1 L281.0,492.1 L282.5,492.1 L284.0,492.1 L285.5,492.1 L287.0,492.1 L288.5,492.1 L290.0,492.1 L291.5,492.1 L293.0,492.1 L294.5,492.1 L296.0,492.1 L297.5,492.1 L299.0,492.1 L300.5,492.1 L302.0,492.1 L303.5,492.1 L305.0,492.1 L306.5,492.1 L308.0,492.1 L309.5,492.1 L311.0,492.1 L312.5,492.1 L314.0,492.1 L315.5,492.1 L317.0,492.1 L318.5,492.1 L320.0,492.1 L321.5,492.1 L323.0,492.1 L324.5,492.1 L326.0,492.1 L327.5,492.1 L329.0,492.1 L330.5,492.1 L332.0,492.1 L333.5,492.0 L335.0,492.0 L336.5,492.0 L338.0,492.0 L339.5,492.0 L341.0,492.0 L342.5,492.0 L344.0,492.0 L345.5,492.0 L347.0,492.0 L348.5,492.0 L350.0,492.0 L351.5,492.0 L353.0,492.0 L354.5,492.0 L356.0,492.0 L357.5,492.0 L359.0,492.0 L360.5,492.0 L362.0,492.0 L363.5,492.0 L365.0,492.0 L366.5,492.0 L368.0,492.0 L369.5,492.0 L371.0,492.0 L372.5,492.0 L374.0,492.0 L375.5,492.0 L377.0,492.0 L378.5,492.0 L380.0,492.0 L381.5,492.0 L383.0,492.0 L384.5,492.0 L386.0,492.0 L387.5,492.0 L389.0,492.0 L390.5,492.0 L392.0,492.0 L393.5,492.0 L395.0,492.0 L396.5,492.0 L398.0,492.0 L399.5,492.0 L401.0,492.0 L402.5,492.0 L404.0,492.0 L405.5,492.0 L407.0,492.0 L408.5,492.0 L410.0,492.0 L411.5,492.0 L413.0,492.0 L414.5,492.0 L416.0,492.0 L417.5,492.0 L419.0,492.0 L420.5,492.0 L422.0,492.0 L423.5,492.0 L425.0,492.0 L426.5,492.0 L428.0,492.0 L429.5,492.0 L431.0,492.0 L432.5,492.0 L434.0,492.0 L435.5,492.0 L437.0,492.0 L438.5,492.0 L440.0,492.0 L441.5,492.0 L443.0,491.9 L444.5,491.9 L446.0,491.9 L447.5,491.9 L449.0,491.9 L450.5,491.8 L452.0,491.8 L453.5,491.8 L455.0,491.8 L456.5,491.7 L458.0,491.7 L459.5,491.7 L461.0,491.2 L462.5,491.3 L464.0,491.9 L465.5,491.1 L467.0,491.1 L468.5,491.1 L470.0,491.9 L471.5,491.1 L473.0,490.9 L474.5,491.7 L476.0,491.0 L477.5,491.7 L479.0,491.4 L480.5,491.6 L482.0,491.7 L483.5,491.2 L485.0,491.4 L486.5,490.6 L488.0,491.3 L489.5,491.0 L491.0,491.1 L492.5,490.3 L494.0,490.8 L495.5,490.8 L497.0,489.8 L498.5,489.9 L500.0,489.9 L501.5,490.0 L503.0,488.3 L504.5,487.1 L506.0,486.3 L507.5,487.4 L509.0,488.3 L510.5,488.7 L512.0,489.5 L513.5,489.9 L515.0,489.8 L516.5,489.8 L518.0,489.4 L519.5,489.7 L521.0,490.1 L522.5,489.5 L524.0,489.7 L525.5,489.2 L527.0,489.8 L528.5,489.9 L530.0,489.9 L531.5,489.8 L533.0,489.8 L534.5,490.0 L536.0,490.3 L537.5,489.6 L539.0,489.6 L540.5,490.3 L542.0,490.6 L543.5,490.2 L545.0,490.2 L546.5,490.5 L548.0,490.0 L549.5,490.2 L551.0,490.2 L552.5,490.6 L554.0,490.4 L555.5,490.4 L557.0,490.9 L558.5,491.2 L560.0,490.6 L561.5,491.0 L563.0,490.8 L564.5,491.3 L566.0,491.1 L567.5,490.9 L569.0,491.0 L570.5,490.9 L572.0,491.5 L573.5,491.5 L575.0,491.3 L576.5,491.4 L578.0,491.2 L579.5,491.6 L581.0,490.8 L582.5,491.6 L584.0,490.9 L585.5,490.9 L587.0,490.7 L588.5,490.9 L590.0,490.8 L591.5,490.4 L593.0,490.2 L594.5,490.2 L596.0,490.2 L597.5,489.6 L599.0,489.8 L600.5,489.8 L602.0,489.2 L603.5,488.8 L605.0,488.6 L606.5,489.0 L608.0,488.8 L609.5,489.2 L611.0,489.2 L612.5,488.7 L614.0,488.7 L615.5,488.9 L617.0,489.0 L618.5,489.6 L620.0,489.9 L621.5,490.0 L623.0,489.5 L624.5,490.2 L626.0,489.8 L627.5,490.0 L629.0,490.4 L630.5,489.9 L632.0,490.0 L633.5,490.8 L635.0,490.4 L636.5,490.6 L638.0,490.9 L639.5,491.1 L641.0,490.5 L642.5,490.7 L644.0,490.8 L645.5,490.8 L647.0,490.4 L648.5,490.7 L650.0,491.0 L651.5,490.4 L653.0,490.5 L654.5,490.0 L656.0,490.1 L657.5,490.4 L659.0,489.8 L660.5,490.5 L662.0,490.5 L663.5,489.6 L665.0,490.4 L666.5,489.8 L668.0,490.1 L669.5,490.1 L671.0,489.6 L672.5,489.9 L674.0,489.8 L675.5,489.9 L677.0,489.4 L678.5,489.8 L680.0,490.0 L681.5,489.6 L683.0,489.4 L684.5,489.0 L686.0,489.3 L687.5,489.1 L689.0,489.4 L690.5,489.3 L692.0,488.9 L693.5,488.2 L695.0,488.4 L696.5,488.1 L698.0,487.4 L699.5,487.7 L701.0,487.1 L702.5,485.7 L704.0,486.7 L705.5,484.8 L707.0,484.4 L708.5,482.5 L710.0,481.6 L711.5,481.8 L713.0,482.2 L714.5,479.5 L716.0,476.9 L717.5,475.8 L719.0,475.1 L720.5,475.7 L722.0,474.9 L723.5,473.6 L725.0,473.3 L726.5,472.0 L728.0,471.7 L729.5,473.1 L731.0,474.6 L732.5,473.6 L734.0,477.0 L735.5,478.9 L737.0,480.4 L738.5,480.2 L740.0,480.7 L741.5,481.2 L743.0,481.8 L744.5,482.5 L746.0,482.1 L747.5,480.4 L749.0,477.8 L750.5,477.9 L752.0,477.5 L753.5,477.5 L755.0,478.6 L756.5,478.7 L758.0,478.0 L759.5,475.3 L761.0,472.9 L762.5,472.0 L764.0,471.8 L765.5,471.3 L767.0,471.6 L768.5,472.0 L770.0,473.7 L771.5,474.6 L773.0,476.4 L774.5,477.2 L776.0,477.3 L777.5,478.2 L779.0,479.9 L780.5,479.3 L782.0,480.3 L783.5,479.8 L785.0,479.4 L786.5,478.1 L788.0,478.1 L789.5,477.9 L791.0,477.8 L792.5,478.6 L794.0,478.8 L795.5,478.9 L797.0,480.6 L798.5,480.7 L800.0,481.5 L801.5,482.2 L803.0,481.5 L804.5,484.4 L806.0,485.7 L807.5,485.7 L809.0,486.2 L810.5,486.2 L812.0,485.3 L813.5,485.5 L815.0,484.3 L816.5,485.1 L818.0,485.8 L819.5,485.8 L821.0,486.2 L822.5,487.0 L824.0,486.9 L825.5,485.6 L827.0,486.8 L828.5,486.5 L830.0,485.6 L831.5,486.2 L833.0,486.5 L834.5,486.7 L836.0,487.6 L837.5,488.3 L839.0,487.2 L840.5,488.2 L842.0,487.6 L843.5,486.1 L845.0,486.9 L846.5,486.0 L848.0,486.3 L849.5,485.8 L851.0,485.7 L852.5,484.8 L854.0,485.5 L855.5,485.5 L857.0,484.8 L858.5,483.5 L860.0,483.5 L861.5,482.7 L863.0,482.3 L864.5,482.4 L866.0,482.7 L867.5,483.0 L869.0,482.8 L870.5,483.3 L872.0,483.5 L873.5,483.0 L875.0,482.7 L876.5,483.0 L878.0,482.6 L879.5,483.1 L881.0,483.8 L882.5,483.3 L884.0,483.1 L885.5,484.5 L887.0,484.3 L888.5,483.8 L890.0,483.9 L891.5,484.2 L893.0,483.8 L894.5,482.4 L896.0,481.2 L897.5,480.8 L899.0,481.4 L900.5,479.7 L902.0,479.8 L903.5,478.8 L905.0,478.3 L906.5,477.8 L908.0,477.7 L909.5,477.0 L911.0,477.5 L912.5,478.4 L914.0,478.7 L915.5,477.3 L917.0,474.5 L918.5,472.4 L920.0,471.1 L921.5,469.5 L923.0,470.2 L924.5,469.2 L926.0,470.3 L927.5,470.7 L929.0,470.5 L930.5,472.7 L932.0,471.8 L933.5,470.8 L935.0,470.4 L936.5,469.2 L938.0,470.8 L939.5,471.0 L941.0,471.3 L942.5,472.0 L944.0,473.4 L945.5,471.5 L947.0,471.2 L948.5,472.7 L950.0,474.8 L951.5,473.6 L953.0,473.5 L954.5,473.4 L956.0,474.2 L957.5,473.1 L959.0,471.8 L960.5,470.6 L962.0,470.9 L963.5,470.7 L965.0,469.3 L966.5,466.0 L968.0,461.1 L969.5,460.1 L971.0,459.1 L972.5,457.7 L974.0,457.8 L975.5,460.7 L977.0,461.1 L978.5,458.4 L980.0,458.4 L981.5,458.4 L983.0,459.9 L984.5,461.0 L986.0,462.2 L987.5,461.8 L989.0,463.6 L990.5,465.0 L992.0,465.0 L993.5,465.4 L995.0,464.0 L996.5,462.2 L998.0,459.6 L999.5,458.9 L1001.0,457.9 L1001.0,492.5 L8.0,492.5 Z" fill="#3a4285" fill-opacity="0.42"/>
<path d="M8.0,492.2 L9.5,492.2 L11.0,492.2 L12.5,492.2 L14.0,492.2 L15.5,492.2 L17.0,492.2 L18.5,492.2 L20.0,492.2 L21.5,492.2 L23.0,492.2 L24.5,492.2 L26.0,492.2 L27.5,492.2 L29.0,492.2 L30.5,492.2 L32.0,492.2 L33.5,492.2 L35.0,492.2 L36.5,492.2 L38.0,492.2 L39.5,492.2 L41.0,492.2 L42.5,492.2 L44.0,492.2 L45.5,492.2 L47.0,492.2 L48.5,492.2 L50.0,492.2 L51.5,492.2 L53.0,492.2 L54.5,492.2 L56.0,492.2 L57.5,492.2 L59.0,492.2 L60.5,492.2 L62.0,492.2 L63.5,492.2 L65.0,492.2 L66.5,492.2 L68.0,492.2 L69.5,492.2 L71.0,492.2 L72.5,492.2 L74.0,492.2 L75.5,492.2 L77.0,492.2 L78.5,492.2 L80.0,492.2 L81.5,492.2 L83.0,492.2 L84.5,492.2 L86.0,492.2 L87.5,492.2 L89.0,492.2 L90.5,492.2 L92.0,492.2 L93.5,492.2 L95.0,492.2 L96.5,492.2 L98.0,492.2 L99.5,492.2 L101.0,492.2 L102.5,492.2 L104.0,492.2 L105.5,492.2 L107.0,492.2 L108.5,492.2 L110.0,492.2 L111.5,492.2 L113.0,492.2 L114.5,492.2 L116.0,492.1 L117.5,492.1 L119.0,492.1 L120.5,492.1 L122.0,492.1 L123.5,492.1 L125.0,492.1 L126.5,492.1 L128.0,492.1 L129.5,492.1 L131.0,492.1 L132.5,492.1 L134.0,492.1 L135.5,492.1 L137.0,492.1 L138.5,492.1 L140.0,492.1 L141.5,492.1 L143.0,492.1 L144.5,492.1 L146.0,492.1 L147.5,492.1 L149.0,492.1 L150.5,492.1 L152.0,492.1 L153.5,492.1 L155.0,492.1 L156.5,492.1 L158.0,492.1 L159.5,492.1 L161.0,492.1 L162.5,492.1 L164.0,492.1 L165.5,492.1 L167.0,492.1 L168.5,492.1 L170.0,492.1 L171.5,492.1 L173.0,492.1 L174.5,492.1 L176.0,492.1 L177.5,492.1 L179.0,492.1 L180.5,492.1 L182.0,492.1 L183.5,492.1 L185.0,492.1 L186.5,492.1 L188.0,492.1 L189.5,492.1 L191.0,492.1 L192.5,492.1 L194.0,492.1 L195.5,492.1 L197.0,492.1 L198.5,492.1 L200.0,492.1 L201.5,492.1 L203.0,492.1 L204.5,492.1 L206.0,492.1 L207.5,492.1 L209.0,492.1 L210.5,492.1 L212.0,492.1 L213.5,492.1 L215.0,492.1 L216.5,492.1 L218.0,492.1 L219.5,492.1 L221.0,492.1 L222.5,492.1 L224.0,492.1 L225.5,492.1 L227.0,492.1 L228.5,492.1 L230.0,492.1 L231.5,492.1 L233.0,492.1 L234.5,492.1 L236.0,492.1 L237.5,492.1 L239.0,492.1 L240.5,492.1 L242.0,492.1 L243.5,492.1 L245.0,492.1 L246.5,492.1 L248.0,492.1 L249.5,492.1 L251.0,492.1 L252.5,492.1 L254.0,492.1 L255.5,492.1 L257.0,492.1 L258.5,492.1 L260.0,492.1 L261.5,492.1 L263.0,492.1 L264.5,492.1 L266.0,492.1 L267.5,492.1 L269.0,492.1 L270.5,492.1 L272.0,492.1 L273.5,492.1 L275.0,492.1 L276.5,492.1 L278.0,492.1 L279.5,492.1 L281.0,492.1 L282.5,492.1 L284.0,492.1 L285.5,492.1 L287.0,492.1 L288.5,492.1 L290.0,492.1 L291.5,492.1 L293.0,492.1 L294.5,492.1 L296.0,492.1 L297.5,492.1 L299.0,492.1 L300.5,492.1 L302.0,492.1 L303.5,492.1 L305.0,492.1 L306.5,492.1 L308.0,492.1 L309.5,492.1 L311.0,492.1 L312.5,492.1 L314.0,492.1 L315.5,492.1 L317.0,492.1 L318.5,492.1 L320.0,492.1 L321.5,492.1 L323.0,492.1 L324.5,492.1 L326.0,492.1 L327.5,492.1 L329.0,492.1 L330.5,492.1 L332.0,492.1 L333.5,492.0 L335.0,492.0 L336.5,492.0 L338.0,492.0 L339.5,492.0 L341.0,492.0 L342.5,492.0 L344.0,492.0 L345.5,492.0 L347.0,492.0 L348.5,492.0 L350.0,492.0 L351.5,492.0 L353.0,492.0 L354.5,492.0 L356.0,492.0 L357.5,492.0 L359.0,492.0 L360.5,492.0 L362.0,492.0 L363.5,492.0 L365.0,492.0 L366.5,492.0 L368.0,492.0 L369.5,492.0 L371.0,492.0 L372.5,492.0 L374.0,492.0 L375.5,492.0 L377.0,492.0 L378.5,492.0 L380.0,492.0 L381.5,492.0 L383.0,492.0 L384.5,492.0 L386.0,492.0 L387.5,492.0 L389.0,492.0 L390.5,492.0 L392.0,492.0 L393.5,492.0 L395.0,492.0 L396.5,492.0 L398.0,492.0 L399.5,492.0 L401.0,492.0 L402.5,492.0 L404.0,492.0 L405.5,492.0 L407.0,492.0 L408.5,492.0 L410.0,492.0 L411.5,492.0 L413.0,492.0 L414.5,492.0 L416.0,492.0 L417.5,492.0 L419.0,492.0 L420.5,492.0 L422.0,492.0 L423.5,492.0 L425.0,492.0 L426.5,492.0 L428.0,492.0 L429.5,492.0 L431.0,492.0 L432.5,492.0 L434.0,492.0 L435.5,492.0 L437.0,492.0 L438.5,492.0 L440.0,492.0 L441.5,492.0 L443.0,491.9 L444.5,491.9 L446.0,491.9 L447.5,491.9 L449.0,491.9 L450.5,491.8 L452.0,491.8 L453.5,491.8 L455.0,491.8 L456.5,491.7 L458.0,491.7 L459.5,491.7 L461.0,491.2 L462.5,491.3 L464.0,491.9 L465.5,491.1 L467.0,491.1 L468.5,491.1 L470.0,491.9 L471.5,491.1 L473.0,490.9 L474.5,491.7 L476.0,491.0 L477.5,491.7 L479.0,491.4 L480.5,491.6 L482.0,491.7 L483.5,491.2 L485.0,491.4 L486.5,490.6 L488.0,491.3 L489.5,491.0 L491.0,491.1 L492.5,490.3 L494.0,490.8 L495.5,490.8 L497.0,489.8 L498.5,489.9 L500.0,489.9 L501.5,490.0 L503.0,488.3 L504.5,487.1 L506.0,486.3 L507.5,487.4 L509.0,488.3 L510.5,488.7 L512.0,489.5 L513.5,489.9 L515.0,489.8 L516.5,489.8 L518.0,489.4 L519.5,489.7 L521.0,490.1 L522.5,489.5 L524.0,489.7 L525.5,489.2 L527.0,489.8 L528.5,489.9 L530.0,489.9 L531.5,489.8 L533.0,489.8 L534.5,490.0 L536.0,490.3 L537.5,489.6 L539.0,489.6 L540.5,490.3 L542.0,490.6 L543.5,490.2 L545.0,490.2 L546.5,490.5 L548.0,490.0 L549.5,490.2 L551.0,490.2 L552.5,490.6 L554.0,490.4 L555.5,490.4 L557.0,490.9 L558.5,491.2 L560.0,490.6 L561.5,491.0 L563.0,490.8 L564.5,491.3 L566.0,491.1 L567.5,490.9 L569.0,491.0 L570.5,490.9 L572.0,491.5 L573.5,491.5 L575.0,491.3 L576.5,491.4 L578.0,491.2 L579.5,491.6 L581.0,490.8 L582.5,491.6 L584.0,490.9 L585.5,490.9 L587.0,490.7 L588.5,490.9 L590.0,490.8 L591.5,490.4 L593.0,490.2 L594.5,490.2 L596.0,490.2 L597.5,489.6 L599.0,489.8 L600.5,489.8 L602.0,489.2 L603.5,488.8 L605.0,488.6 L606.5,489.0 L608.0,488.8 L609.5,489.2 L611.0,489.2 L612.5,488.7 L614.0,488.7 L615.5,488.9 L617.0,489.0 L618.5,489.6 L620.0,489.9 L621.5,490.0 L623.0,489.5 L624.5,490.2 L626.0,489.8 L627.5,490.0 L629.0,490.4 L630.5,489.9 L632.0,490.0 L633.5,490.8 L635.0,490.4 L636.5,490.6 L638.0,490.9 L639.5,491.1 L641.0,490.5 L642.5,490.7 L644.0,490.8 L645.5,490.8 L647.0,490.4 L648.5,490.7 L650.0,491.0 L651.5,490.4 L653.0,490.5 L654.5,490.0 L656.0,490.1 L657.5,490.4 L659.0,489.8 L660.5,490.5 L662.0,490.5 L663.5,489.6 L665.0,490.4 L666.5,489.8 L668.0,490.1 L669.5,490.1 L671.0,489.6 L672.5,489.9 L674.0,489.8 L675.5,489.9 L677.0,489.4 L678.5,489.8 L680.0,490.0 L681.5,489.6 L683.0,489.4 L684.5,489.0 L686.0,489.3 L687.5,489.1 L689.0,489.4 L690.5,489.3 L692.0,488.9 L693.5,488.2 L695.0,488.4 L696.5,488.1 L698.0,487.4 L699.5,487.7 L701.0,487.1 L702.5,485.7 L704.0,486.7 L705.5,484.8 L707.0,484.4 L708.5,482.5 L710.0,481.6 L711.5,481.8 L713.0,482.2 L714.5,479.5 L716.0,476.9 L717.5,475.8 L719.0,475.1 L720.5,475.7 L722.0,474.9 L723.5,473.6 L725.0,473.3 L726.5,472.0 L728.0,471.7 L729.5,473.1 L731.0,474.6 L732.5,473.6 L734.0,477.0 L735.5,478.9 L737.0,480.4 L738.5,480.2 L740.0,480.7 L741.5,481.2 L743.0,481.8 L744.5,482.5 L746.0,482.1 L747.5,480.4 L749.0,477.8 L750.5,477.9 L752.0,477.5 L753.5,477.5 L755.0,478.6 L756.5,478.7 L758.0,478.0 L759.5,475.3 L761.0,472.9 L762.5,472.0 L764.0,471.8 L765.5,471.3 L767.0,471.6 L768.5,472.0 L770.0,473.7 L771.5,474.6 L773.0,476.4 L774.5,477.2 L776.0,477.3 L777.5,478.2 L779.0,479.9 L780.5,479.3 L782.0,480.3 L783.5,479.8 L785.0,479.4 L786.5,478.1 L788.0,478.1 L789.5,477.9 L791.0,477.8 L792.5,478.6 L794.0,478.8 L795.5,478.9 L797.0,480.6 L798.5,480.7 L800.0,481.5 L801.5,482.2 L803.0,481.5 L804.5,484.4 L806.0,485.7 L807.5,485.7 L809.0,486.2 L810.5,486.2 L812.0,485.3 L813.5,485.5 L815.0,484.3 L816.5,485.1 L818.0,485.8 L819.5,485.8 L821.0,486.2 L822.5,487.0 L824.0,486.9 L825.5,485.6 L827.0,486.8 L828.5,486.5 L830.0,485.6 L831.5,486.2 L833.0,486.5 L834.5,486.7 L836.0,487.6 L837.5,488.3 L839.0,487.2 L840.5,488.2 L842.0,487.6 L843.5,486.1 L845.0,486.9 L846.5,486.0 L848.0,486.3 L849.5,485.8 L851.0,485.7 L852.5,484.8 L854.0,485.5 L855.5,485.5 L857.0,484.8 L858.5,483.5 L860.0,483.5 L861.5,482.7 L863.0,482.3 L864.5,482.4 L866.0,482.7 L867.5,483.0 L869.0,482.8 L870.5,483.3 L872.0,483.5 L873.5,483.0 L875.0,482.7 L876.5,483.0 L878.0,482.6 L879.5,483.1 L881.0,483.8 L882.5,483.3 L884.0,483.1 L885.5,484.5 L887.0,484.3 L888.5,483.8 L890.0,483.9 L891.5,484.2 L893.0,483.8 L894.5,482.4 L896.0,481.2 L897.5,480.8 L899.0,481.4 L900.5,479.7 L902.0,479.8 L903.5,478.8 L905.0,478.3 L906.5,477.8 L908.0,477.7 L909.5,477.0 L911.0,477.5 L912.5,478.4 L914.0,478.7 L915.5,477.3 L917.0,474.5 L918.5,472.4 L920.0,471.1 L921.5,469.5 L923.0,470.2 L924.5,469.2 L926.0,470.3 L927.5,470.7 L929.0,470.5 L930.5,472.7 L932.0,471.8 L933.5,470.8 L935.0,470.4 L936.5,469.2 L938.0,470.8 L939.5,471.0 L941.0,471.3 L942.5,472.0 L944.0,473.4 L945.5,471.5 L947.0,471.2 L948.5,472.7 L950.0,474.8 L951.5,473.6 L953.0,473.5 L954.5,473.4 L956.0,474.2 L957.5,473.1 L959.0,471.8 L960.5,470.6 L962.0,470.9 L963.5,470.7 L965.0,469.3 L966.5,466.0 L968.0,461.1 L969.5,460.1 L971.0,459.1 L972.5,457.7 L974.0,457.8 L975.5,460.7 L977.0,461.1 L978.5,458.4 L980.0,458.4 L981.5,458.4 L983.0,459.9 L984.5,461.0 L986.0,462.2 L987.5,461.8 L989.0,463.6 L990.5,465.0 L992.0,465.0 L993.5,465.4 L995.0,464.0 L996.5,462.2 L998.0,459.6 L999.5,458.9 L1001.0,457.9" fill="none" stroke="#5470d0" stroke-width="1.3"/>
</svg>

<!-- toolbar -->
<div class="grp" style="left:8px;top:6px;width:164px;height:32px"></div>
<div class="act" style="left:10px;top:8px;width:61px;height:28px"></div>
<div class="t w" style="left:26.5px;top:15px">Price</div>
<div class="t g" style="left:90.4px;top:15px;letter-spacing:0.2px">Market cap</div>

<div class="grp" style="left:181px;top:6px;width:102px;height:32px"></div>
<div class="act" style="left:183px;top:8px;width:48px;height:28px"></div>


<div class="grp" style="left:449px;top:6px;width:121px;height:32px"></div>
<div class="t g" style="left:482px;top:15px">TradingView</div>
<div class="grp" style="left:578px;top:6px;width:215px;height:32px"></div>
<div class="t g" style="left:593.6px;top:16px">Compare with</div>

<div class="grp" style="left:801px;top:6px;width:259px;height:32px"></div>
<div class="act" style="left:803px;top:8px;width:30px;height:28px"></div>
<div class="t" style="left:811.3px;top:14px;font-size:11.5px;color:#bcc1ce">1D</div>
<div class="t g" style="left:843.3px;top:14px;font-size:11.5px">7D</div>
<div class="t g" style="left:877.3px;top:14px;font-size:11.5px">1M</div>
<div class="t g" style="left:911.9px;top:14px;font-size:11.5px">1Y</div>
<div class="t g" style="left:944.9px;top:14px;font-size:11.5px">All</div>
<div class="abs" style="left:972px;top:13px;width:1px;height:17px;background:#53596a"></div>
<div class="t g" style="left:985.7px;top:14px;font-size:11.5px">LOG</div>
<div class="abs" style="left:1022px;top:13px;width:1px;height:17px;background:#53596a"></div>
<svg width="1072" height="532" style="pointer-events:none"><g fill="#a1a7bb"><circle cx="1039.2" cy="22.2" r="1.1"/><circle cx="1043.2" cy="22.2" r="1.1"/><circle cx="1047.2" cy="22.2" r="1.1"/></g></svg>

<svg width="1072" height="532" style="pointer-events:none">
<polyline points="201.3,28.1 205.5,21.8 207.6,24.9 212.5,17.9" fill="none" stroke="#a1a7bb" stroke-width="1.3" stroke-linejoin="round" stroke-linecap="round"/>
<g stroke="#a1a7bb" stroke-width="1.3" fill="none">
<line x1="253.4" y1="17.6" x2="253.4" y2="22.1"/><line x1="253.4" y1="25.6" x2="253.4" y2="28.4"/>
<rect x="251.6" y="22.1" width="3.8" height="3.5" rx="0.8"/>
<line x1="260.4" y1="17.4" x2="260.4" y2="19.3"/><line x1="260.4" y1="26.7" x2="260.4" y2="28.6"/>
<rect x="258.5" y="19.3" width="3.9" height="7.4" rx="0.8"/>
</g>
<g stroke="#a1a7bb" stroke-width="1.3" fill="none" stroke-linecap="round">
<polyline points="462.5,17.2 462.5,27.2 475,27.2"/>
<path d="M465,24.5 C468,24 469,18 474.5,17.5"/>
</g>
<polyline points="771,20.5 776,25.5 781,20.5" fill="none" stroke="#cfd6e4" stroke-width="1.6" stroke-linecap="round" stroke-linejoin="round"/>
</svg>
<!-- tooltip -->
<div class="abs" style="left:183px;top:54px;width:280px;height:98px;background:#222531;border-radius:8px"></div>
<div class="t w" style="left:199.6px;top:72px;font-size:12.5px;letter-spacing:0.45px">05/20/2025</div>
<div class="t g" style="left:382.7px;top:72.5px;font-size:11.3px;font-weight:400;-webkit-text-stroke:0.4px #a1a7bb">10:15:00 PM</div>
<div class="abs" style="left:199.5px;top:97.5px;width:13.5px;height:13.5px;border-radius:50%;background:#16c784;border:2px solid #f0f2f6"></div>
<div class="t g" style="left:221.5px;top:97px;font-weight:400">Price:</div>
<div class="t w" style="left:256.5px;top:97px;letter-spacing:0.4px">$105,861.89</div>
<svg width="1072" height="532" style="pointer-events:none">
<path d="M200.4,119.8 L212,119.8 Q213.8,119.8 213.8,121.6 L213.8,127 L206.2,132.8 L198.6,127 L198.6,121.6 Q198.6,119.8 200.4,119.8 Z" fill="#a1a7bb" stroke="#f0f2f6" stroke-width="1.9" stroke-linejoin="round"/>
<path d="M202.8,124 Q204.5,122.6 206.2,124.1 Q207.9,122.6 209.6,124 Q209.6,125 206.2,127.8 Q202.8,125 202.8,124 Z" fill="#f0f2f6"/>
</svg>
<div class="t g" style="left:221.5px;top:121px;font-weight:400;letter-spacing:0.15px">Vol 24h:</div>
<div class="t w" style="left:271.2px;top:121px;letter-spacing:0.4px">$51.28B</div>

<!-- labels -->
<div class="abs" style="left:610px;top:92px;width:58px;height:26px;background:#16c784;border-radius:4px"></div>
<div class="t w" style="left:616.8px;top:98px;font-size:11.5px">108.98K</div>

<div class="abs" style="left:1002px;top:68px;width:58px;height:26px;background:#9096aa;border-radius:4px"></div>
<div class="t w" style="left:1008.7px;top:74px;font-size:11.5px">109.48K</div>
<div class="yl" style="top:96.5px">109.00K</div><div class="yl" style="top:145.5px">108.00K</div><div class="yl" style="top:193.5px">107.00K</div><div class="yl" style="top:241.5px">106.00K</div><div class="yl" style="top:290.5px">105.00K</div><div class="yl" style="top:338.5px">104.00K</div>
<div class="t g" style="left:1015.8px;top:387px;font-size:12px">USD</div>

<div class="abs" style="left:10px;top:276px;width:51px;height:21px;background:rgba(31,34,46,0.96);border-radius:4px"></div>
<div class="t" style="left:15.4px;top:280px;font-size:11.2px;font-weight:400;color:#c8cdd9;-webkit-text-stroke:0.2px #c8cdd9">105.26K</div>

<div class="xl" style="left:11.0px">8:00 PM</div><div class="xl" style="left:93.3px">10:00 PM</div><div class="xl" style="left:175.6px">21 May</div><div class="xl" style="left:258.0px">2:00 AM</div><div class="xl" style="left:340.3px">4:00 AM</div><div class="xl" style="left:422.6px">6:00 AM</div><div class="xl" style="left:504.9px">8:00 AM</div><div class="xl" style="left:587.2px">10:00 AM</div><div class="xl" style="left:669.6px">12:00 PM</div><div class="xl" style="left:751.9px">2:00 PM</div><div class="xl" style="left:834.2px">4:00 PM</div><div class="xl" style="left:916.5px">6:00 PM</div>
<div class="abs" style="left:84px;top:397px;width:120px;height:30px;background:#8d93a7;border-radius:3px"></div>
<div class="t w" style="left:92.6px;top:405px;font-size:11.3px">20 May &#39;25 22:15:00</div>

<!-- 105 pill -->
<svg width="1072" height="532" style="pointer-events:none">
<path d="M22.5,424 L49,424 A11,11 0 0 1 49,446 L22.5,446 L11.5,435 Z" fill="#62677b" stroke="#62677b" stroke-width="2" stroke-linejoin="round"/>
<g fill="none" stroke="#fff" stroke-width="1.5" stroke-linecap="round">
<path d="M21.2,437.5 A5.3,5.3 0 1 0 21.6,432.2"/>
<polyline points="25.5,432.5 25.5,435.5 28,437.5"/>
</g>
<path d="M19.5,430 L21.9,432.6 L18.8,433.3 Z" fill="#fff"/>
</svg>
<div class="t w" style="left:36px;top:428px;font-size:11.5px">105</div>

<!-- watermark -->
<svg width="1072" height="532" style="pointer-events:none">
<path d="M851.5,353.5 L855.8,345.5 Q857.3,343 858.5,345.5 L859.2,351 Q859.8,353.5 861,351 L863.2,346 Q864.5,343.5 865.6,346 L866.3,350.5 Q867,353 868.8,350.5 A10.3,10.3 0 1 0 866.3,356.2" fill="none" stroke="#e3e7ef" stroke-width="2.2" stroke-linecap="round" stroke-linejoin="round"/>
</svg>
<div class="t" style="left:879px;top:342px;font-size:15.5px;font-weight:400;-webkit-text-stroke:0.55px #e3e7ef;color:#e3e7ef;letter-spacing:0.15px">CoinMarketCap</div>

<!-- bitcoin pill -->
<div class="abs" style="left:866px;top:423px;width:134px;height:25px;background:#8b44f0;border-radius:12.5px"></div>
<svg width="1072" height="532" style="pointer-events:none">
<path d="M925,423.5 L932.5,419 L940,423.5 Z" fill="#8b44f0"/>
<path d="M879.5,429 L874,436 L878,436 L876.5,441.5 L882,434 L878,434 Z" fill="none" stroke="#fff" stroke-width="1.3" stroke-linejoin="round"/>
</svg>
<div class="t w" style="left:888.7px;top:428px;font-size:10.7px">Bitcoin is gaining i...</div>

<!-- pause handle -->
<div class="abs" style="left:994.5px;top:466px;width:13px;height:13px;border-radius:50%;background:#1c1f2b;box-shadow:0 0 2px 1px rgba(20,22,32,0.8)"></div>
<div class="abs" style="left:998.4px;top:468.7px;width:1.5px;height:7px;background:#e3e7ef"></div>
<div class="abs" style="left:1001.7px;top:468.7px;width:1.5px;height:7px;background:#e3e7ef"></div>

<div class="yr" style="left:19.0px">2011</div><div class="yr" style="left:86.0px">2012</div><div class="yr" style="left:152.9px">2013</div><div class="yr" style="left:219.9px">2014</div><div class="yr" style="left:286.8px">2015</div><div class="yr" style="left:353.8px">2016</div><div class="yr" style="left:420.7px">2017</div><div class="yr" style="left:487.7px">2018</div><div class="yr" style="left:554.6px">2019</div><div class="yr" style="left:621.6px">2020</div><div class="yr" style="left:688.5px">2021</div><div class="yr" style="left:755.5px">2022</div><div class="yr" style="left:822.4px">2023</div><div class="yr" style="left:889.4px">2024</div><div class="yr" style="left:956.3px">2025</div>
</body></html>
